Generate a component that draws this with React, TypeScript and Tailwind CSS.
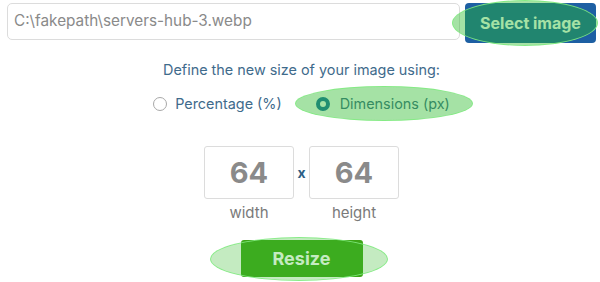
import React from "react";

const Ellipse = ({ cls }: { cls: string }) => (
  <div
    className={`pointer-events-none absolute rounded-[50%] border-[1.5px] border-[rgba(130,235,130,0.9)] bg-[rgba(40,185,40,0.42)] ${cls}`}
  />
);

export default function App() {
  return (
    <div
      className="relative h-[282px] w-[600px] overflow-hidden bg-white"
      style={{ fontFamily: "Inter, 'Noto Sans', sans-serif" }}
    >
      <div className="flex items-start gap-[5px] pl-[7px] pr-[4px] pt-[3px]">
        <div className="flex h-[37px] flex-1 items-center rounded-[5px] border border-[#dcdcdc] pl-[6px] text-[15.3px] text-[#8a8a8a]">
          C:\fakepath\servers-hub-3.webp
        </div>
        <div className="flex h-[40px] w-[131px] items-center justify-center rounded-[4px] bg-[#1d5fa3] text-[16px] font-bold text-white">
          Select image
        </div>
      </div>

      <div className="flex flex-col items-center pl-[3px]">
        <div className="mt-[17px] text-[14.4px] leading-[20px] text-[#3f6b8c]">
          Define the new size of your image using:
        </div>
        <div className="mt-[14px] flex items-center text-[14.4px] leading-[20px] text-[#3f6b8c]">
          <span className="h-[14px] w-[14px] rounded-full border border-[#a8a8a8]" />
          <span className="ml-[8px]">Percentage (%)</span>
          <span className="ml-[34px] h-[14px] w-[14px] rounded-full border-[4px] border-[#1b6fa6] bg-white" />
          <span className="ml-[10px]">Dimensions (px)</span>
        </div>
        <div className="mt-[32px] flex items-center">
          <div className="flex h-[53px] w-[90px] items-center justify-center rounded-[3px] border border-[#dcdcdc] text-[29px] font-bold text-[#8a8a8a]">
            64
          </div>
          <div className="flex w-[15px] justify-center text-[14px] font-bold text-[#2d5f86]">x</div>
          <div className="flex h-[53px] w-[90px] items-center justify-center rounded-[3px] border border-[#dcdcdc] text-[29px] font-bold text-[#8a8a8a]">
            64
          </div>
        </div>
        <div className="mt-[4px] flex text-[15px] leading-[20px] text-[#7a7a7a]">
          <div className="w-[90px] text-center">width</div>
          <div className="w-[15px]" />
          <div className="w-[90px] text-center">height</div>
        </div>
        <div className="mt-[17px] flex h-[37px] w-[122px] items-center justify-center rounded-[3px] bg-[#3da517] text-[18px] font-bold text-white">
          Resize
        </div>
      </div>

      <Ellipse cls="left-[452px] top-[0px] h-[46px] w-[146px]" />
      <Ellipse cls="left-[295px] top-[86px] h-[35px] w-[178px]" />
      <Ellipse cls="left-[210px] top-[237px] h-[44px] w-[178px] bg-[rgba(60,190,50,0.3)]" />
    </div>
  );
}
